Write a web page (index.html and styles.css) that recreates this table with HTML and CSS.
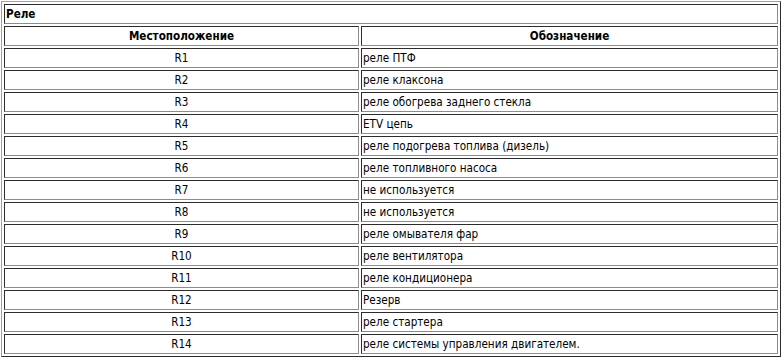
FILE: index.html
```html
<!DOCTYPE html>
<html lang="ru">
<head>
<meta charset="utf-8">
<title>Реле</title>
<link rel="stylesheet" href="styles.css">
</head>
<body>
<table class="relay-table">
  <colgroup>
    <col class="col-loc">
    <col class="col-desc">
  </colgroup>
  <tr><td class="title" colspan="2">Реле</td></tr>
  <tr><th>Местоположение</th><th>Обозначение</th></tr>
  <tr><td class="loc">R1</td><td>реле ПТФ</td></tr>
  <tr><td class="loc">R2</td><td>реле клаксона</td></tr>
  <tr><td class="loc">R3</td><td>реле обогрева заднего стекла</td></tr>
  <tr><td class="loc">R4</td><td>ETV цепь</td></tr>
  <tr><td class="loc">R5</td><td>реле подогрева топлива (дизель)</td></tr>
  <tr><td class="loc">R6</td><td>реле топливного насоса</td></tr>
  <tr><td class="loc">R7</td><td>не используется</td></tr>
  <tr><td class="loc">R8</td><td>не используется</td></tr>
  <tr><td class="loc">R9</td><td>реле омывателя фар</td></tr>
  <tr><td class="loc">R10</td><td>реле вентилятора</td></tr>
  <tr><td class="loc">R11</td><td>реле кондиционера</td></tr>
  <tr><td class="loc">R12</td><td>Резерв</td></tr>
  <tr><td class="loc">R13</td><td>реле стартера</td></tr>
  <tr><td class="loc">R14</td><td>реле системы управления двигателем.</td></tr>
</table>
</body>
</html>
```
FILE: styles.css
```css
html, body {
  margin: 0;
  padding: 0;
  background: #ffffff;
}
body {
  padding: 1px 0 0 1px;
  font-family: "DejaVu Sans Condensed", "DejaVu Sans", sans-serif;
  font-size: 11.6px;
  color: #000000;
}
.relay-table {
  width: 780px;
  border-collapse: separate;
  border-spacing: 2px;
  border: 1px solid;
  border-color: #a0a0a0 #2c2c2c #2c2c2c #a0a0a0;
  table-layout: fixed;
}
.col-loc {
  width: 355px;
}
.relay-table td,
.relay-table th {
  border: 1px solid;
  border-color: #2c2c2c #8c8c8c #8c8c8c #2c2c2c;
  padding: 1px 1px 0;
  height: 18px;
  line-height: 17px;
  box-sizing: border-box;
  white-space: nowrap;
  overflow: hidden;
  text-align: left;
}
.relay-table th {
  font-weight: bold;
  text-align: center;
}
.relay-table td.title {
  font-weight: bold;
}
.relay-table td.loc {
  text-align: center;
}
```
